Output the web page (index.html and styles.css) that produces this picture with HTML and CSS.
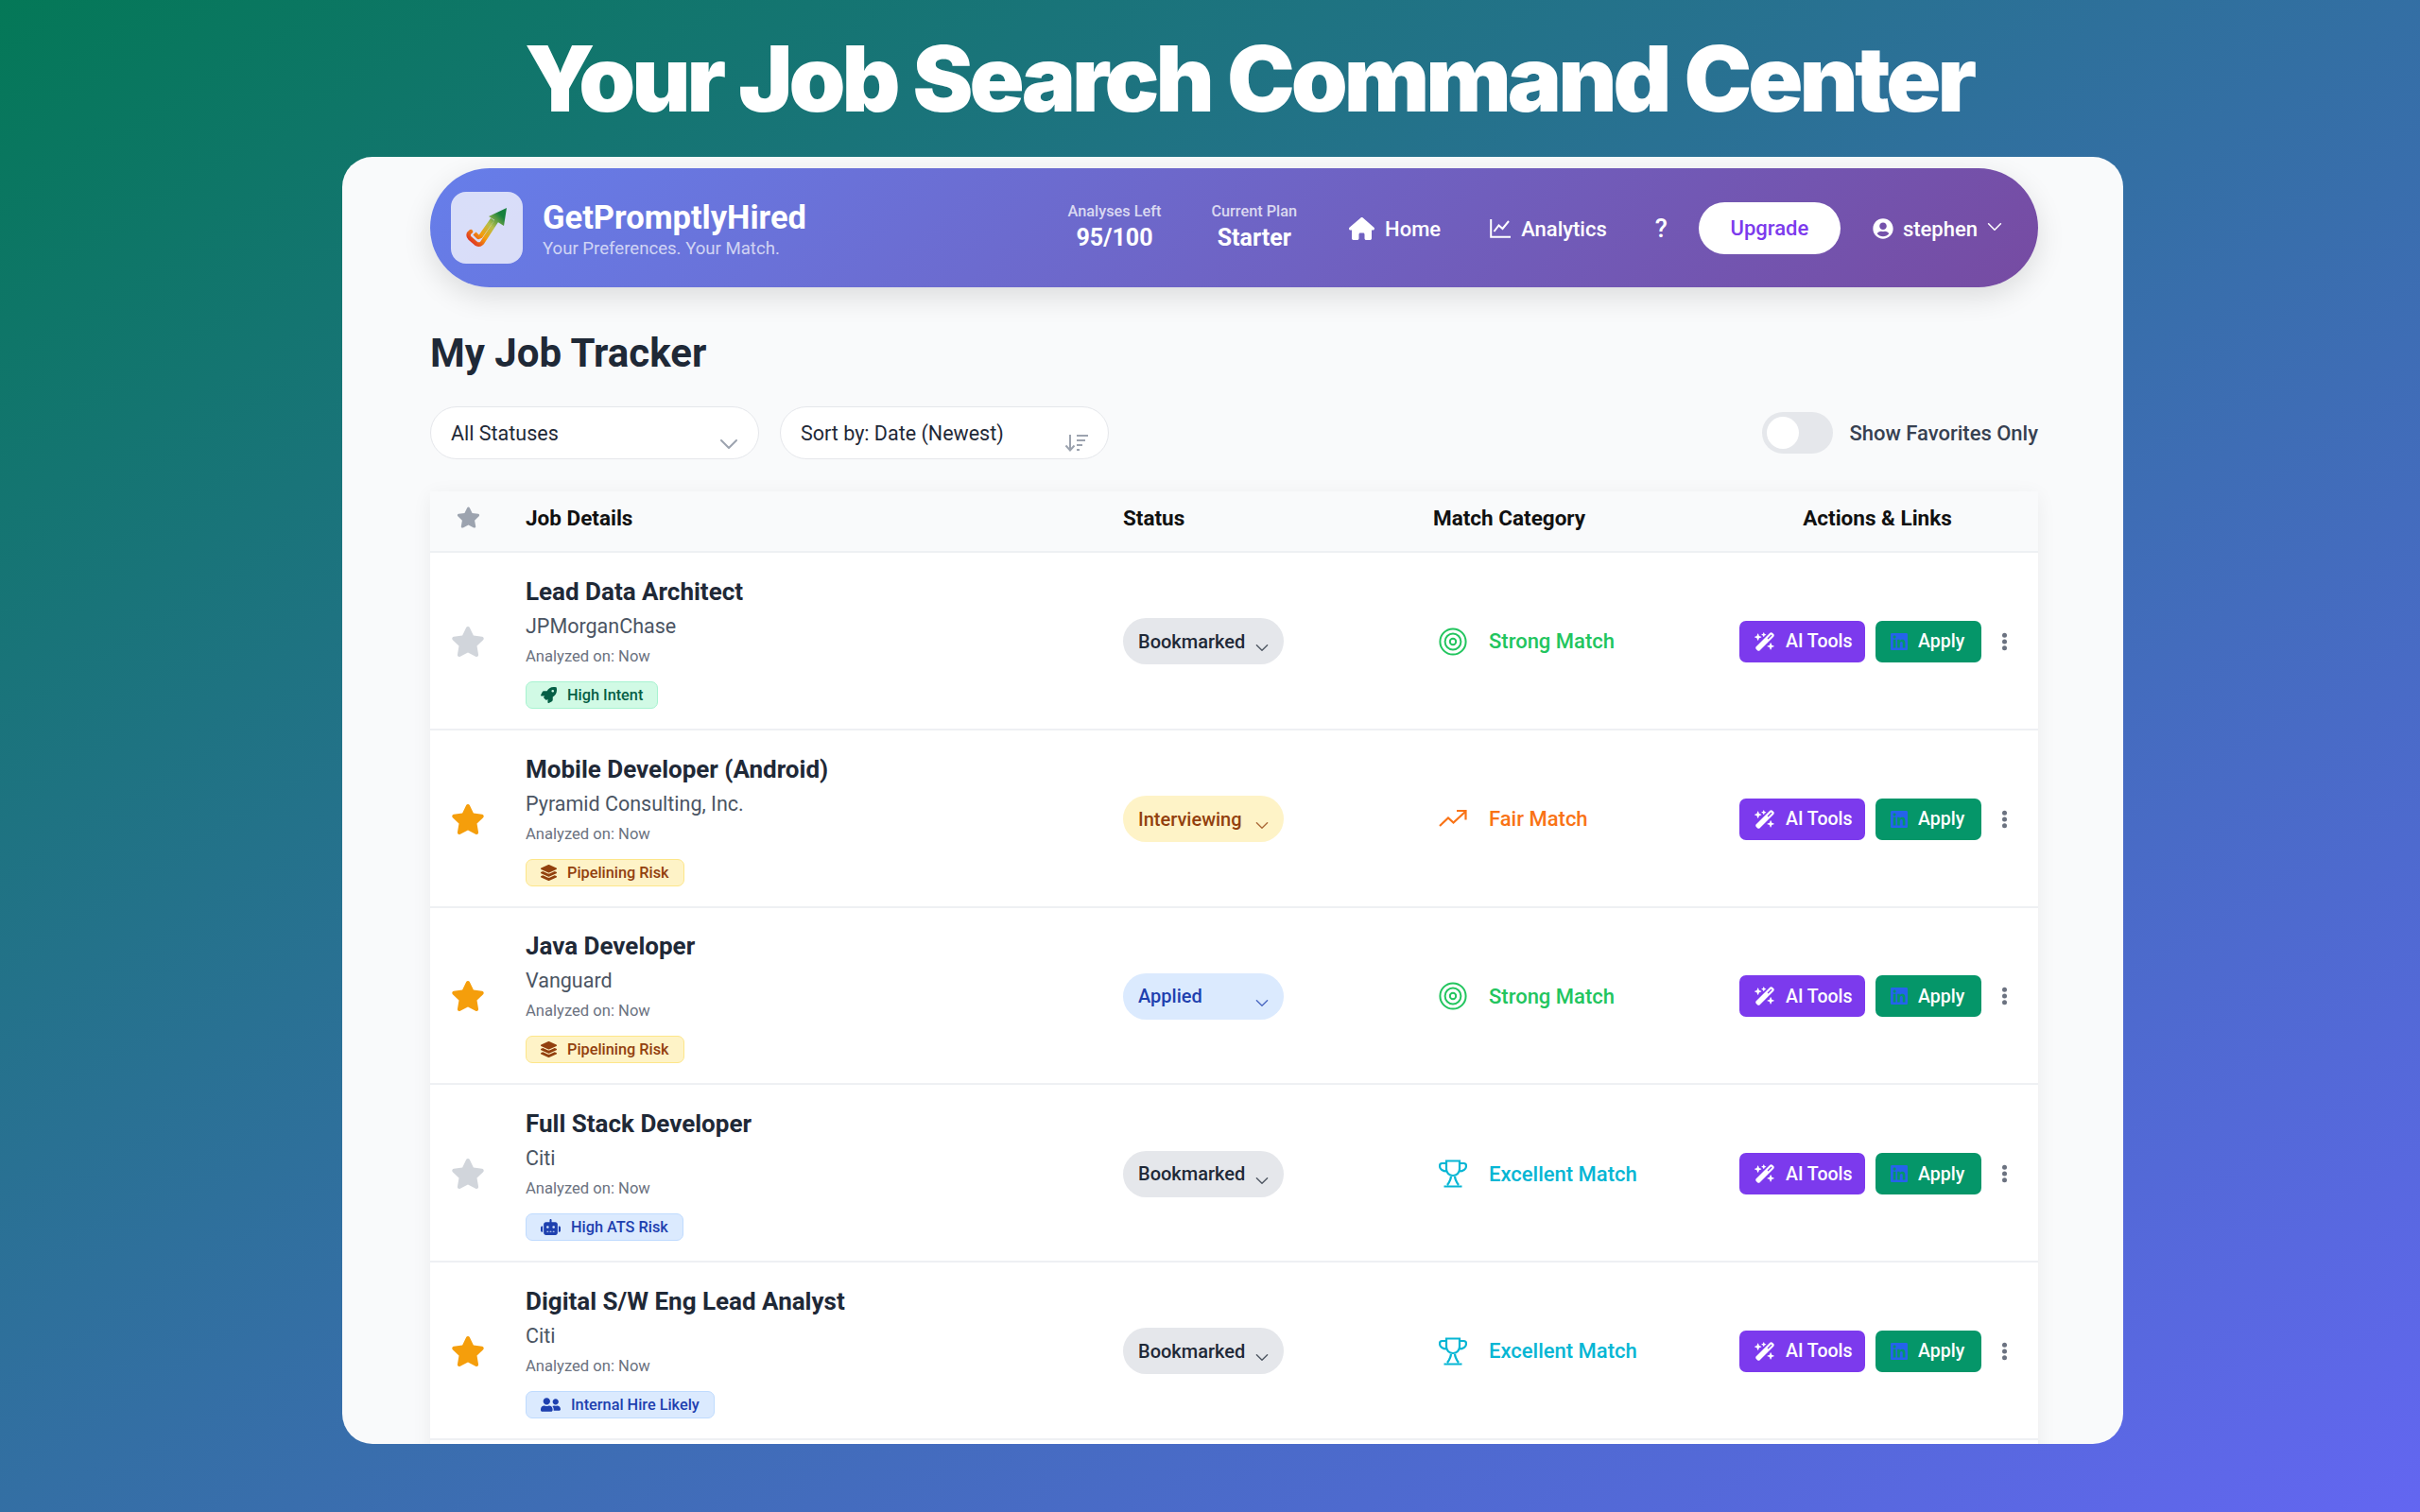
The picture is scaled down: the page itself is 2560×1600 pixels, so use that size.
FILE: index.html
```html
<!DOCTYPE html>
<html lang="en">
<head>
    <meta charset="UTF-8">
    <title>GetPromptlyHired - My Job Tracker</title>
    <link rel="stylesheet" href="styles.css">
</head>
<body>
    <svg class="icon-defs" xmlns="http://www.w3.org/2000/svg">
        <symbol id="i-star" viewBox="0 0 576 512"><path d="M259.3 17.8L194 150.2 47.9 171.5c-26.2 3.8-36.7 36.1-17.7 54.6l105.7 103-25 145.5c-4.5 26.3 23.2 46 46.4 33.7L288 439.6l130.7 68.7c23.2 12.2 50.9-7.4 46.4-33.7l-25-145.5 105.7-103c19-18.5 8.5-50.8-17.7-54.6L382 150.2 316.7 17.8c-11.7-23.6-45.6-23.9-57.4 0z"/></symbol>
        <symbol id="i-chevron" viewBox="0 0 20 12"><path d="M2 2l8 8 8-8" fill="none" stroke="currentColor" stroke-width="2" stroke-linecap="round" stroke-linejoin="round"/></symbol>
        <symbol id="i-rocket" viewBox="0 0 512 512"><path d="M505.12 19.09c-1.19-5.53-6.66-11-12.21-12.19C460.72 0 435.51 0 410.41 0 307.18 0 245.27 55.2 199.05 128H94.84c-16.35.02-35.56 11.88-42.89 26.48L2.52 253.3A28.4 28.4 0 0 0 0 264a24 24 0 0 0 24 24h103.81l-22.47 22.47c-11.37 11.36-13 32.26 0 45.25l50.9 50.9c11.16 11.19 32.16 13.16 45.28 0l22.47-22.47V488a24 24 0 0 0 24 24 28.56 28.56 0 0 0 10.71-2.52l98.73-49.39c14.63-7.3 26.51-26.5 26.51-42.86V312.8c72.6-46.31 128.03-108.41 128.03-211.1.01-25.2.01-50.4-6.95-82.61zM384.04 168a40 40 0 1 1 40-40 40 40 0 0 1-40 40z"/></symbol>
        <symbol id="i-layers" viewBox="0 0 512 512"><path d="M12.41 148.02l232.94 105.67c6.8 3.09 14.49 3.09 21.29 0l232.94-105.67c16.55-7.51 16.55-32.52 0-40.03L266.65 2.31a25.607 25.607 0 0 0-21.29 0L12.41 107.98c-16.55 7.51-16.55 32.53 0 40.04zm487.18 88.28l-58.09-26.33-161.64 73.27c-7.56 3.43-15.59 5.17-23.86 5.17s-16.29-1.74-23.86-5.17L70.51 209.97l-58.1 26.33c-16.55 7.5-16.55 32.5 0 40l232.94 105.59c6.8 3.08 14.49 3.08 21.29 0L499.59 276.3c16.55-7.5 16.55-32.5 0-40zm0 127.8l-57.87-26.23-161.86 73.37c-7.56 3.43-15.59 5.17-23.86 5.17s-16.29-1.74-23.86-5.17L70.29 337.87 12.41 364.1c-16.55 7.5-16.55 32.5 0 40l232.94 105.59c6.8 3.08 14.49 3.08 21.29 0L499.59 404.1c16.55-7.5 16.55-32.5 0-40z"/></symbol>
        <symbol id="i-robot" viewBox="0 0 640 512"><path d="M320 0c17.7 0 32 14.3 32 32V96H472c39.8 0 72 32.2 72 72V440c0 39.8-32.2 72-72 72H168c-39.8 0-72-32.2-72-72V168c0-39.8 32.2-72 72-72H288V32c0-17.7 14.3-32 32-32zM208 384c-8.8 0-16 7.2-16 16s7.2 16 16 16h32c8.8 0 16-7.2 16-16s-7.2-16-16-16H208zm96 0c-8.8 0-16 7.2-16 16s7.2 16 16 16h32c8.8 0 16-7.2 16-16s-7.2-16-16-16H304zm96 0c-8.8 0-16 7.2-16 16s7.2 16 16 16h32c8.8 0 16-7.2 16-16s-7.2-16-16-16H400zM264 256a40 40 0 1 0 -80 0 40 40 0 1 0 80 0zm152 40a40 40 0 1 0 0-80 40 40 0 1 0 0 80zM48 224H64V416H48c-26.5 0-48-21.5-48-48V272c0-26.5 21.5-48 48-48zm544 0c26.5 0 48 21.5 48 48v96c0 26.5-21.5 48-48 48H576V224h16z"/></symbol>
        <symbol id="i-people" viewBox="0 0 640 512"><path d="M192 256c61.9 0 112-50.1 112-112S253.9 32 192 32 80 82.1 80 144s50.1 112 112 112zm76.8 32h-8.3c-20.8 10-43.9 16-68.5 16s-47.6-6-68.5-16h-8.3C51.6 288 0 339.6 0 403.2V432c0 26.5 21.5 48 48 48h288c26.5 0 48-21.5 48-48v-28.8c0-63.6-51.6-115.2-115.2-115.2zM480 256c53 0 96-43 96-96s-43-96-96-96-96 43-96 96 43 96 96 96zm48 32h-3.8c-13.9 4.8-28.6 8-44.2 8s-30.3-3.2-44.2-8H432c-20.4 0-39.2 5.9-55.7 15.4 24.4 26.3 39.7 61.2 39.7 99.8v38.4c0 2.2-.5 4.3-.6 6.4H592c26.5 0 48-21.5 48-48 0-61.9-50.1-112-112-112z"/></symbol>
        <symbol id="i-target" viewBox="0 0 30 30"><g fill="none" stroke="currentColor" stroke-width="2"><circle cx="15" cy="15" r="13.6"/><circle cx="15" cy="15" r="8.4"/><circle cx="15" cy="15" r="3.2"/></g></symbol>
        <symbol id="i-trend" viewBox="0 0 30 30"><path d="M1 22l9-8.500 5.500 5L28 7M19 6h9.500V15.500" fill="none" stroke="currentColor" stroke-width="2.200"/></symbol>
        <symbol id="i-trophy" viewBox="0 0 30 30"><path d="M8 1.500h14v8.500c0 4-3 7-7 7s-7-3-7-7zM8 4H3.500C1.500 4 1 5.500 1 7c0 3 3 5.500 7.500 5.500M22 4h4.500C28.500 4 29 5.500 29 7c0 3-3 5.500-7.500 5.500M13 17c0 4-1 6-4 10M17 17c0 4 1 6 4 10M5.500 28.500h19" fill="none" stroke="currentColor" stroke-width="2.200"/></symbol>
        <symbol id="i-wand" viewBox="0 0 576 512"><path d="M234.7 42.7L197 56.8c-3 1.100-5 4-5 7.200s2 6.100 5 7.200l37.700 14.100L248.800 123c1.100 3 4 5 7.200 5s6.100-2 7.200-5l14.100-37.700L315 71.200c3-1.100 5-4 5-7.200s-2-6.100-5-7.200L277.300 42.700 263.200 5c-1.100-3-4-5-7.200-5s-6.100 2-7.200 5L234.700 42.700zM46.100 395.400c-18.700 18.700-18.700 49.100 0 67.900l34.600 34.600c18.700 18.700 49.100 18.700 67.900 0L529.900 116.500c18.700-18.700 18.700-49.100 0-67.900L495.300 14.100c-18.700-18.700-49.100-18.700-67.900 0L46.100 395.400zM484.600 82.600l-105 105-23.300-23.300 105-105 23.300 23.300zM7.500 117.200C3 118.900 0 123.200 0 128s3 9.100 7.500 10.800L64 160l21.200 56.500c1.700 4.500 6 7.500 10.800 7.500s9.100-3 10.800-7.500L128 160l56.500-21.200c4.500-1.700 7.500-6 7.500-10.800s-3-9.100-7.500-10.800L128 96 106.800 39.500C105.100 35 100.800 32 96 32s-9.100 3-10.800 7.500L64 96 7.500 117.200zm352 256c-4.500 1.700-7.500 6-7.500 10.800s3 9.100 7.500 10.800L416 416l21.200 56.500c1.700 4.500 6 7.500 10.800 7.500s9.100-3 10.800-7.500L480 416l56.500-21.200c4.500-1.700 7.500-6 7.500-10.800s-3-9.100-7.500-10.800L480 352l-21.200-56.500c-1.700-4.500-6-7.500-10.800-7.500s-9.100 3-10.800 7.500L416 352l-56.500 21.200z"/></symbol>
        <symbol id="i-linkedin" viewBox="0 32 448 448"><path d="M416 32H31.900C14.300 32 0 46.500 0 64.300v383.400C0 465.500 14.300 480 31.900 480H416c17.600 0 32-14.500 32-32.300V64.300c0-17.800-14.400-32.300-32-32.300zM135.400 416H69V202.200h66.500V416zm-33.200-243c-21.300 0-38.500-17.300-38.500-38.500S80.900 96 102.200 96c21.200 0 38.500 17.300 38.500 38.500 0 21.300-17.200 38.500-38.500 38.500zm282.100 243h-66.400V312c0-24.800-.5-56.700-34.500-56.700-34.600 0-39.900 27-39.900 54.900V416h-66.400V202.200h63.700v29.200h.9c8.900-16.800 30.600-34.500 62.900-34.500 67.200 0 79.700 44.300 79.700 101.900V416z"/></symbol>
        <symbol id="i-kebab" viewBox="0 0 8 24"><circle cx="4" cy="4" r="3"/><circle cx="4" cy="12" r="3"/><circle cx="4" cy="20" r="3"/></symbol>
    </svg>

    <h1 class="hero-title">Your Job Search Command Center</h1>

    <div class="app-card">
        <!-- Top nav -->
        <div class="navbar">
            <div class="brand">
                <div class="brand-logo">
                    <svg viewBox="0 0 76 76" width="76" height="76">
                        <defs>
                            <linearGradient id="logoGrad" gradientUnits="userSpaceOnUse" x1="20" y1="55" x2="58" y2="18">
                                <stop offset="0" stop-color="#dc2626"/>
                                <stop offset="0.3" stop-color="#f59e0b"/>
                                <stop offset="0.55" stop-color="#b5bf4a"/>
                                <stop offset="0.85" stop-color="#15803d"/>
                            </linearGradient>
                        </defs>
                        <path d="M21 42C18 44 18 47 20 49L27 55C29 56 31 56 33 54L48 31" fill="none" stroke="url(#logoGrad)" stroke-width="4.500" stroke-linecap="round" stroke-linejoin="round"/>
                        <path d="M25 44L29 48L31.500 47L44 29" fill="none" stroke="url(#logoGrad)" stroke-width="4.500" stroke-linejoin="round"/>
                        <path d="M59 17L40 26L56 36z" fill="url(#logoGrad)"/>
                    </svg>
                </div>
                <div class="brand-text">
                    <div class="brand-name">GetPromptlyHired</div>
                    <div class="brand-tag">Your Preferences. Your Match.</div>
                </div>
            </div>
            <div class="nav-right">
                <div class="stats">
                    <div class="stat">
                        <div class="stat-label">Analyses Left</div>
                        <div class="stat-value">95/100</div>
                    </div>
                    <div class="stat">
                        <div class="stat-label">Current Plan</div>
                        <div class="stat-value">Starter</div>
                    </div>
                </div>
                <a class="nav-link">
                    <svg class="nav-home" viewBox="0 0 576 512"><path d="M575.800 255.500c0 18-15 32.100-32 32.100h-32l.7 160.200c0 2.700-.2 5.400-.5 8.100V472c0 22.100-17.900 40-40 40H456c-1.100 0-2.200 0-3.300-.1c-1.400 .1-2.800 .1-4.200 .1H416 392c-22.100 0-40-17.900-40-40V448 384c0-17.700-14.300-32-32-32H256c-17.700 0-32 14.300-32 32v64 24c0 22.100-17.900 40-40 40H160 128.100c-1.500 0-3-.1-4.500-.2c-1.200 .1-2.400 .2-3.600 .2H104c-22.100 0-40-17.900-40-40V360c0-.9 0-1.900 .1-2.800V287.600H32c-18 0-32-14-32-32.100c0-9 3-17 10-24L266.400 8c7-7 15-8 22-8s15 2 21 7L564.800 231.500c8 7 12 15 11 24z"/></svg>
                    Home
                </a>
                <a class="nav-link">
                    <svg class="nav-chart" viewBox="0 0 22 22"><path d="M1.200 1v18.800H22M4.500 14l5-6.500 4 3.500L20 3" fill="none" stroke="#fff" stroke-width="2"/></svg>
                    Analytics
                </a>
                <div class="nav-end">
                    <span class="nav-help">?</span>
                    <button class="upgrade-btn">Upgrade</button>
                    <div class="user-menu">
                        <svg class="user-icon" viewBox="0 0 496 512"><path d="M248 8C111 8 0 119 0 256s111 248 248 248 248-111 248-248S385 8 248 8zm0 96c48.600 0 88 39.400 88 88s-39.400 88-88 88-88-39.400-88-88 39.400-88 88-88zm0 344c-58.700 0-111.300-26.600-146.500-68.200 18.800-35.400 55.600-59.800 98.500-59.800 2.400 0 4.800.4 7.100 1.100 13 4.200 26.600 6.900 40.900 6.900 14.300 0 28-2.700 40.900-6.900 2.300-.7 4.700-1.100 7.100-1.100 42.900 0 79.700 24.400 98.500 59.800C359.300 421.400 306.700 448 248 448z"/></svg>
                        stephen
                        <svg class="user-chevron"><use href="#i-chevron"/></svg>
                    </div>
                </div>
            </div>
        </div>

        <h2 class="page-title">My Job Tracker</h2>

        <!-- Filters -->
        <div class="filters">
            <div class="filter-select">
                All Statuses
                <svg class="filter-chevron"><use href="#i-chevron"/></svg>
            </div>
            <div class="filter-select">
                Sort by: Date (Newest)
                <svg class="sort-icon" viewBox="0 0 26 20"><path d="M6 1v16M1.500 12.500L6 17.500l4.500-5" fill="none" stroke="currentColor" stroke-width="2"/><path d="M13 2h12M13 7h9M13 12h6M13 17h3" stroke="currentColor" stroke-width="2"/></svg>
            </div>
            <div class="fav-toggle">
                <span class="toggle-track"><span class="toggle-knob"></span></span>
                Show Favorites Only
            </div>
        </div>

        <!-- Job table -->
        <div class="job-table">
            <div class="job-row job-head">
                <div class="star-cell"><svg class="star-head"><use href="#i-star"/></svg></div>
                <div class="head-job">Job Details</div>
                <div>Status</div>
                <div>Match Category</div>
                <div class="head-actions">Actions &amp; Links</div>
            </div>

            <div class="job-row">
                <div class="star-cell"><svg class="star"><use href="#i-star"/></svg></div>
                <div class="job-info">
                    <div class="job-title">Lead Data Architect</div>
                    <div class="job-company">JPMorganChase</div>
                    <div class="job-date">Analyzed on: Now</div>
                    <span class="tag tag-green"><svg class="tag-icon"><use href="#i-rocket"/></svg>High Intent</span>
                </div>
                <div><span class="status status-grey">Bookmarked<svg class="status-chevron"><use href="#i-chevron"/></svg></span></div>
                <div class="match match-strong"><svg class="match-icon"><use href="#i-target"/></svg>Strong Match</div>
                <div class="actions">
                    <button class="btn btn-ai"><svg class="btn-wand"><use href="#i-wand"/></svg>AI Tools</button>
                    <button class="btn btn-apply"><svg class="btn-in"><use href="#i-linkedin"/></svg>Apply</button>
                    <svg class="kebab"><use href="#i-kebab"/></svg>
                </div>
            </div>

            <div class="job-row">
                <div class="star-cell"><svg class="star star-on"><use href="#i-star"/></svg></div>
                <div class="job-info">
                    <div class="job-title">Mobile Developer (Android)</div>
                    <div class="job-company">Pyramid Consulting, Inc.</div>
                    <div class="job-date">Analyzed on: Now</div>
                    <span class="tag tag-amber"><svg class="tag-icon"><use href="#i-layers"/></svg>Pipelining Risk</span>
                </div>
                <div><span class="status status-amber">Interviewing<svg class="status-chevron"><use href="#i-chevron"/></svg></span></div>
                <div class="match match-fair"><svg class="match-icon"><use href="#i-trend"/></svg>Fair Match</div>
                <div class="actions">
                    <button class="btn btn-ai"><svg class="btn-wand"><use href="#i-wand"/></svg>AI Tools</button>
                    <button class="btn btn-apply"><svg class="btn-in"><use href="#i-linkedin"/></svg>Apply</button>
                    <svg class="kebab"><use href="#i-kebab"/></svg>
                </div>
            </div>

            <div class="job-row">
                <div class="star-cell"><svg class="star star-on"><use href="#i-star"/></svg></div>
                <div class="job-info">
                    <div class="job-title">Java Developer</div>
                    <div class="job-company">Vanguard</div>
                    <div class="job-date">Analyzed on: Now</div>
                    <span class="tag tag-amber"><svg class="tag-icon"><use href="#i-layers"/></svg>Pipelining Risk</span>
                </div>
                <div><span class="status status-blue">Applied<svg class="status-chevron"><use href="#i-chevron"/></svg></span></div>
                <div class="match match-strong"><svg class="match-icon"><use href="#i-target"/></svg>Strong Match</div>
                <div class="actions">
                    <button class="btn btn-ai"><svg class="btn-wand"><use href="#i-wand"/></svg>AI Tools</button>
                    <button class="btn btn-apply"><svg class="btn-in"><use href="#i-linkedin"/></svg>Apply</button>
                    <svg class="kebab"><use href="#i-kebab"/></svg>
                </div>
            </div>

            <div class="job-row">
                <div class="star-cell"><svg class="star"><use href="#i-star"/></svg></div>
                <div class="job-info">
                    <div class="job-title">Full Stack Developer</div>
                    <div class="job-company">Citi</div>
                    <div class="job-date">Analyzed on: Now</div>
                    <span class="tag tag-blue"><svg class="tag-icon tag-icon-wide"><use href="#i-robot"/></svg>High ATS Risk</span>
                </div>
                <div><span class="status status-grey">Bookmarked<svg class="status-chevron"><use href="#i-chevron"/></svg></span></div>
                <div class="match match-excellent"><svg class="match-icon"><use href="#i-trophy"/></svg>Excellent Match</div>
                <div class="actions">
                    <button class="btn btn-ai"><svg class="btn-wand"><use href="#i-wand"/></svg>AI Tools</button>
                    <button class="btn btn-apply"><svg class="btn-in"><use href="#i-linkedin"/></svg>Apply</button>
                    <svg class="kebab"><use href="#i-kebab"/></svg>
                </div>
            </div>

            <div class="job-row">
                <div class="star-cell"><svg class="star star-on"><use href="#i-star"/></svg></div>
                <div class="job-info">
                    <div class="job-title">Digital S/W Eng Lead Analyst</div>
                    <div class="job-company">Citi</div>
                    <div class="job-date">Analyzed on: Now</div>
                    <span class="tag tag-blue"><svg class="tag-icon tag-icon-wide"><use href="#i-people"/></svg>Internal Hire Likely</span>
                </div>
                <div><span class="status status-grey">Bookmarked<svg class="status-chevron"><use href="#i-chevron"/></svg></span></div>
                <div class="match match-excellent"><svg class="match-icon"><use href="#i-trophy"/></svg>Excellent Match</div>
                <div class="actions">
                    <button class="btn btn-ai"><svg class="btn-wand"><use href="#i-wand"/></svg>AI Tools</button>
                    <button class="btn btn-apply"><svg class="btn-in"><use href="#i-linkedin"/></svg>Apply</button>
                    <svg class="kebab"><use href="#i-kebab"/></svg>
                </div>
            </div>
        </div>
    </div>
</body>
</html>
```

FILE: styles.css
```css
* {
    box-sizing: border-box;
}

html, body {
    height: 100%;
}

body {
    margin: 0;
    height: 1600px;
    overflow: hidden;
    font-family: Roboto, sans-serif;
    background: linear-gradient(to bottom right, #047857, #6366f1);
    color: #1f2937;
}

.icon-defs {
    display: none;
}

.hero-title {
    margin: 0;
    height: 166px;
    line-height: 166px;
    padding-left: 555px;
    font-family: Inter, sans-serif;
    font-size: 96px;
    font-weight: 900;
    letter-spacing: -4px;
    word-spacing: 2px;
    color: #fff;
    white-space: nowrap;
}

.app-card {
    width: 1884px;
    height: 1362px;
    margin-left: 362px;
    padding: 12px 90px 0 93px;
    background: #f9fafb;
    border-radius: 32px;
    overflow: hidden;
}

/* Top nav */
.navbar {
    height: 126px;
    padding: 0 38px 0 22px;
    display: flex;
    align-items: center;
    justify-content: space-between;
    border-radius: 63px;
    background: linear-gradient(135deg, #667eea, #764ba2);
    box-shadow: 0 10px 30px rgba(0, 0, 0, 0.12);
    color: #fff;
}

.brand {
    display: flex;
    align-items: center;
    gap: 21px;
}

.brand-logo {
    width: 76px;
    height: 76px;
    border-radius: 16px;
    background: rgba(255, 255, 255, 0.75);
}

.brand-logo svg {
    display: block;
}

.brand-text {
    padding-top: 3px;
}

.brand-name {
    font-size: 34.500px;
    font-weight: 700;
    line-height: 40px;
}

.brand-tag {
    font-size: 18.600px;
    line-height: 26px;
    color: rgba(255, 255, 255, 0.7);
}

.nav-right {
    display: flex;
    align-items: center;
    gap: 52px;
    padding-top: 2px;
}

.stats {
    display: flex;
    gap: 53px;
    margin-right: 3px;
}

.stat {
    text-align: center;
}

.stat-label {
    font-size: 16.300px;
    font-weight: 500;
    line-height: 20px;
    color: rgba(255, 255, 255, 0.75);
}

.stat-value {
    font-size: 25px;
    font-weight: 700;
    line-height: 36px;
}

.nav-link {
    display: flex;
    align-items: center;
    gap: 11px;
    font-size: 22px;
    font-weight: 500;
}

.nav-home {
    width: 27px;
    height: 24px;
    fill: #fff;
}

.nav-chart {
    width: 22px;
    height: 22px;
}

.nav-end {
    display: flex;
    align-items: center;
    gap: 33px;
    margin-left: -1px;
}

.nav-help {
    font-size: 27px;
    font-weight: 500;
}

.upgrade-btn {
    width: 150px;
    height: 55px;
    margin-top: -2px;
    border: none;
    border-radius: 28px;
    background: #fff;
    font-family: inherit;
    font-size: 22px;
    font-weight: 500;
    color: #7c3aed;
}

.user-menu {
    margin-left: 1px;
    display: flex;
    align-items: center;
    gap: 10px;
    font-size: 22px;
    font-weight: 500;
}

.user-icon {
    width: 22px;
    height: 22px;
    fill: #fff;
}

.user-chevron {
    width: 16px;
    height: 10px;
    margin-bottom: 4px;
}

.page-title {
    margin: 42px 0 0;
    font-size: 42px;
    font-weight: 700;
    line-height: 56px;
    color: #1f2937;
}

/* Filters */
.filters {
    margin-top: 28px;
    display: flex;
    align-items: center;
    gap: 22px;
}

.filter-select {
    width: 348px;
    height: 56px;
    padding-left: 21px;
    position: relative;
    display: flex;
    align-items: center;
    background: #fff;
    border: 1px solid #e5e7eb;
    border-radius: 28px;
    font-size: 21.500px;
    color: #1f2937;
}

.filter-chevron {
    position: absolute;
    right: 21px;
    top: 33px;
    width: 20px;
    height: 12px;
    color: #9ca3af;
}

.sort-icon {
    position: absolute;
    right: 20px;
    top: 28px;
    width: 26px;
    height: 20px;
    color: #9ca3af;
}

.fav-toggle {
    margin-left: auto;
    display: flex;
    align-items: center;
    gap: 17px;
    font-size: 22px;
    font-weight: 500;
    color: #374151;
}

.toggle-track {
    width: 75px;
    height: 44px;
    padding: 5px;
    display: block;
    border-radius: 22px;
    background: #e5e7eb;
}

.toggle-knob {
    width: 34px;
    height: 34px;
    display: block;
    border-radius: 50%;
    background: #fff;
}

/* Job table */
.job-table {
    height: 1100px;
    margin-top: 34px;
    background: #fff;
    box-shadow: 0 4px 20px rgba(0, 0, 0, 0.06);
}

.job-row {
    height: 187.75px;
    padding-top: 2px;
    display: grid;
    grid-template-columns: 80px 653px 328px 304px 1fr;
    align-items: center;
    border-bottom: 2px solid #eef0f3;
}

.job-head {
    height: 65px;
    padding-top: 0;
    padding-bottom: 8px;
    background: #f9fafb;
    font-size: 22.500px;
    font-weight: 700;
    color: #111;
}

.head-job {
    padding-left: 21px;
}

.head-actions {
    text-align: center;
    padding-right: 4px;
}

.star-cell {
    display: flex;
    justify-content: center;
}

.star {
    width: 36px;
    height: 32px;
    fill: #d1d5db;
}

.star-on {
    fill: #f59e0b;
}

.star-head {
    width: 25px;
    height: 23px;
    fill: #9ca3af;
}

.job-info {
    padding-left: 21px;
}

.job-title {
    font-size: 26px;
    font-weight: 700;
    line-height: 36px;
    color: #1f2937;
}

.job-company {
    margin-top: 3px;
    font-size: 21.500px;
    line-height: 32px;
    color: #4b5563;
}

.job-date {
    margin-top: 4px;
    font-size: 16.600px;
    line-height: 24px;
    color: #6b7280;
}

.tag {
    width: fit-content;
    height: 29px;
    margin-top: 14px;
    padding: 0 15px;
    display: flex;
    align-items: center;
    gap: 11px;
    border: 1px solid;
    border-radius: 7px;
    font-size: 16.300px;
    font-weight: 500;
}

.tag-icon {
    width: 17px;
    height: 17px;
    fill: currentColor;
}

.tag-icon-wide {
    width: 21px;
}

.tag-green {
    background: #d1fae5;
    border-color: #a7f3d0;
    color: #065f46;
}

.tag-amber {
    background: #fef3c7;
    border-color: #fde68a;
    color: #92400e;
}

.tag-blue {
    background: #dbeafe;
    border-color: #bfdbfe;
    color: #1e40af;
}

.status {
    width: 170px;
    height: 49px;
    padding-left: 16px;
    position: relative;
    display: flex;
    align-items: center;
    border-radius: 25px;
    font-size: 20px;
    font-weight: 500;
}

.status-chevron {
    position: absolute;
    right: 16px;
    top: 27px;
    width: 14px;
    height: 9px;
    opacity: 0.75;
}

.status-grey {
    background: #e5e7eb;
    color: #1f2937;
}

.status-amber {
    background: #fef3c7;
    color: #92400e;
}

.status-blue {
    background: #dbeafe;
    color: #1e40af;
}

.match {
    display: flex;
    align-items: center;
    gap: 23px;
    padding-left: 6px;
    font-size: 22px;
    font-weight: 500;
}

.match-icon {
    width: 30px;
    height: 30px;
}

.match-strong {
    color: #22c55e;
}

.match-fair {
    color: #f97316;
}

.match-excellent {
    color: #06b6d4;
}

.actions {
    padding-left: 20px;
    display: flex;
    align-items: center;
    gap: 11px;
}

.btn {
    height: 44px;
    display: flex;
    align-items: center;
    border: none;
    border-radius: 7px;
    font-family: inherit;
    font-size: 19.500px;
    font-weight: 500;
    color: #fff;
}

.btn-ai {
    width: 133px;
    padding-left: 16px;
    gap: 11px;
    background: #7c3aed;
}

.btn-apply {
    width: 112px;
    padding-left: 16px;
    gap: 11px;
    background: #059669;
}

.btn-wand {
    width: 22px;
    height: 20px;
    fill: #fff;
}

.btn-in {
    width: 18px;
    height: 18px;
    fill: #2563eb;
}

.kebab {
    width: 7px;
    height: 20px;
    margin-left: 10px;
    fill: #6b7280;
}
```
